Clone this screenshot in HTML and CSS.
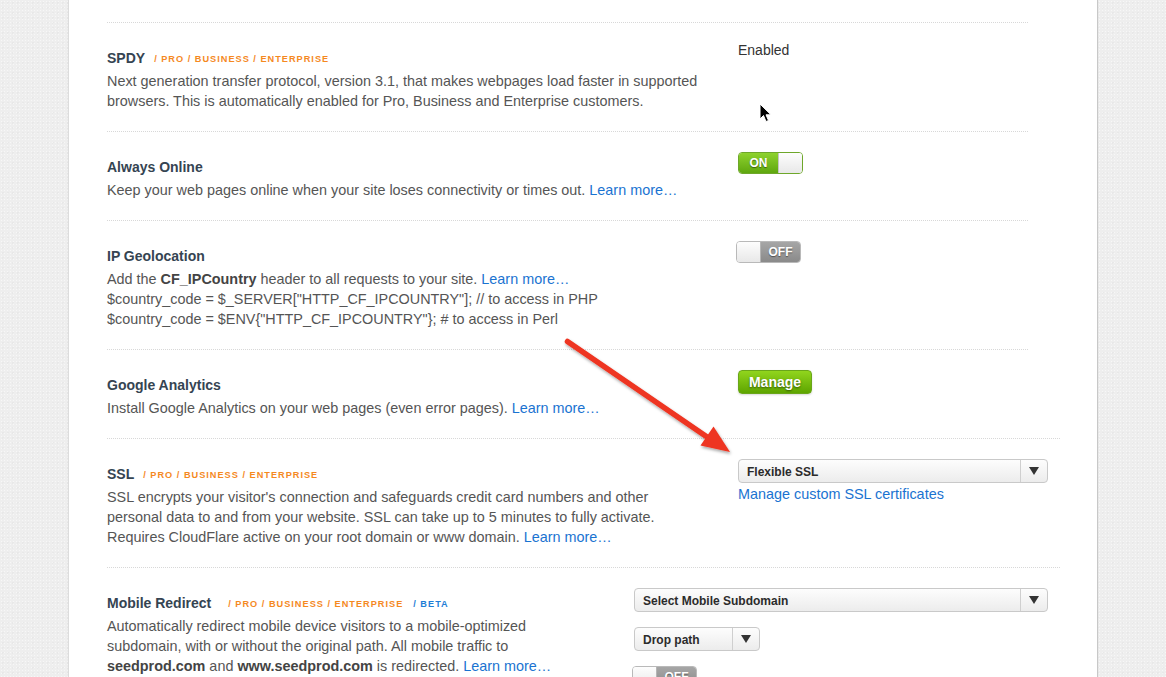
FILE: index.html
```html
<!DOCTYPE html>
<html>
<head>
<meta charset="utf-8">
<title>Settings</title>
<link rel="stylesheet" href="styles.css">
</head>
<body>
<div class="page">
  <div class="panel">
    <div class="lead"></div>

    <div class="row">
      <div class="info">
        <h3 class="title">SPDY<span class="plans">/ PRO / BUSINESS / ENTERPRISE</span></h3>
        <p class="desc">Next generation transfer protocol, version 3.1, that makes webpages load faster in supported<br>browsers. This is automatically enabled for Pro, Business and Enterprise customers.</p>
      </div>
      <div class="ctrl"><span class="status">Enabled</span></div>
    </div>

    <div class="row">
      <div class="info">
        <h3 class="title">Always Online</h3>
        <p class="desc">Keep your web pages online when your site loses connectivity or times out. <a href="#">Learn more…</a></p>
      </div>
      <div class="ctrl">
        <div class="toggle on"><span class="lbl">ON</span><span class="knob"></span></div>
      </div>
    </div>

    <div class="row">
      <div class="info">
        <h3 class="title">IP Geolocation</h3>
        <p class="desc">Add the <b>CF_IPCountry</b> header to all requests to your site. <a href="#">Learn more…</a><br>$country_code = $_SERVER["HTTP_CF_IPCOUNTRY"]; // to access in PHP<br>$country_code = $ENV{"HTTP_CF_IPCOUNTRY"}; # to access in Perl</p>
      </div>
      <div class="ctrl">
        <div class="toggle off shift"><span class="knob"></span><span class="lbl">OFF</span></div>
      </div>
    </div>

    <div class="row">
      <div class="info">
        <h3 class="title">Google Analytics</h3>
        <p class="desc">Install Google Analytics on your web pages (even error pages). <a href="#">Learn more…</a></p>
      </div>
      <div class="ctrl">
        <button class="btn-green">Manage</button>
      </div>
    </div>

    <div class="row wide">
      <div class="info">
        <h3 class="title">SSL<span class="plans">/ PRO / BUSINESS / ENTERPRISE</span></h3>
        <p class="desc">SSL encrypts your visitor's connection and safeguards credit card numbers and other<br>personal data to and from your website. SSL can take up to 5 minutes to fully activate.<br>Requires CloudFlare active on your root domain or www domain. <a href="#">Learn more…</a></p>
      </div>
      <div class="ctrl">
        <div class="select ssl"><span class="val">Flexible SSL</span><span class="caret"></span></div>
        <a class="sublink" href="#">Manage custom SSL certificates</a>
      </div>
    </div>

    <div class="row wide narrow-info">
      <div class="info">
        <h3 class="title">Mobile Redirect<span class="plans far">/ PRO / BUSINESS / ENTERPRISE</span><span class="plans beta">/ BETA</span></h3>
        <p class="desc">Automatically redirect mobile device visitors to a mobile-optimized<br>subdomain, with or without the original path. All mobile traffic to<br><b>seedprod.com</b> and <b>www.seedprod.com</b> is redirected. <a href="#">Learn more…</a></p>
      </div>
      <div class="ctrl stack">
        <div class="select mobile"><span class="val">Select Mobile Subdomain</span><span class="caret"></span></div>
        <div class="select path"><span class="val">Drop path</span><span class="caret"></span></div>
        <div class="toggle off nudge"><span class="knob"></span><span class="lbl">OFF</span></div>
      </div>
    </div>
  </div>

  <svg class="arrow" width="200" height="140" viewBox="0 0 200 140">
    <defs>
      <filter id="sh" x="-20%" y="-20%" width="140%" height="140%">
        <feDropShadow dx="1" dy="2" stdDeviation="1.6" flood-color="#000" flood-opacity="0.35"/>
      </filter>
    </defs>
    <g filter="url(#sh)" fill="#ee3420">
      <path d="M5.5 8.5 L148 106" stroke="#ee3420" stroke-width="5.5" stroke-linecap="round"/>
      <path d="M168 119 L138.5 112.5 L151.5 93.5 Z"/>
    </g>
  </svg>

  <svg class="cursor" width="14" height="20" viewBox="0 0 14 20">
    <path d="M1 1 L1 16 L4.5 12.5 L7 18.5 L9.5 17.5 L7 11.8 L12 11.8 Z" fill="#000" stroke="#fff" stroke-width="1"/>
  </svg>
</div>
</body>
</html>
```

FILE: styles.css
```css
html, body {
  margin: 0;
  padding: 0;
}
body {
  background: #efefef;
  font-family: "Liberation Sans", Arial, sans-serif;
  font-size: 14px;
  color: #555;
}
.page {
  position: relative;
  width: 1166px;
  height: 677px;
  overflow: hidden;
  background-color: #eeeeee;
  background-image: radial-gradient(rgba(255,255,255,0.5) 1px, transparent 1px), radial-gradient(rgba(0,0,0,0.025) 1px, transparent 1px);
  background-size: 3px 3px, 5px 5px;
}
.panel {
  box-sizing: border-box;
  margin-left: 68px;
  width: 1030px;
  height: 677px;
  background: #fff;
  border-left: 1px solid #dcdcdc;
  border-right: 1px solid #c8c8c8;
  padding-left: 38px;
  box-shadow: 0 0 2px rgba(0,0,0,0.05);
}
.lead {
  height: 22px;
}
.row {
  width: 921px;
  display: grid;
  grid-template-columns: 631px 1fr;
  border-top: 1px dotted #d8d8d8;
  padding: 0 0 20px;
}
.row.wide {
  width: 953px;
}
.row.narrow-info {
  grid-template-columns: 527px 1fr;
}
.info {
  padding-top: 25px;
}
.title {
  margin: 0 0 3px;
  height: 20px;
  font-size: 14px;
  line-height: 20px;
  font-weight: bold;
  color: #354452;
  white-space: nowrap;
}
.plans {
  margin-left: 9px;
  font-size: 9.2px;
  line-height: 10px;
  letter-spacing: 1px;
  color: #f5891f;
  font-weight: bold;
  vertical-align: 1px;
}
.plans.far {
  margin-left: 17px;
}
.plans.beta {
  margin-left: 10px;
  color: #1f7ed6;
}
.desc {
  margin: 0;
  font-size: 14.4px;
  line-height: 20px;
  color: #555;
  white-space: nowrap;
}
.desc b {
  color: #444;
}
a {
  color: #1a73d1;
  text-decoration: none;
}
.ctrl {
  padding-top: 20px;
  display: flex;
  flex-direction: column;
  align-items: flex-start;
}
.ctrl.stack {
  gap: 15px;
}
.status {
  line-height: 14px;
  color: #333;
  font-size: 14px;
}
.toggle {
  box-sizing: border-box;
  width: 65px;
  height: 22px;
  border: 1px solid #b9b9b9;
  border-radius: 4px;
  display: flex;
  overflow: hidden;
  font-size: 12px;
  font-weight: bold;
  color: #fff;
}
.toggle .lbl {
  flex: 1;
  display: flex;
  align-items: center;
  justify-content: center;
  text-shadow: 0 1px 1px rgba(0,0,0,0.45);
}
.toggle .knob {
  width: 23px;
  background: linear-gradient(#fdfdfd, #e8e8e8);
}
.toggle.on {
  border-color: #6ea72a;
}
.toggle.on .lbl {
  background: linear-gradient(#8ed22e, #5fa70f);
}
.toggle.on .knob {
  border-left: 1px solid #c4c4c4;
}
.toggle.off .lbl {
  background: linear-gradient(#a6a6a6, #8a8a8a);
}
.toggle.off .knob {
  border-right: 1px solid #b5b5b5;
}
.toggle.shift {
  margin-left: -2px;
}
.toggle.nudge {
  margin-left: -2px;
}
.btn-green {
  box-sizing: border-box;
  width: 74px;
  height: 24px;
  padding: 0;
  border: 1px solid #6aa619;
  border-radius: 4px;
  background: linear-gradient(#91d51d, #5ea500);
  color: #fff;
  font-family: "Liberation Sans", Arial, sans-serif;
  font-weight: bold;
  font-size: 14px;
  text-shadow: 0 1px 2px rgba(0,0,0,0.5);
  box-shadow: 0 1px 2px rgba(0,0,0,0.15);
}
.select {
  box-sizing: border-box;
  height: 24px;
  display: flex;
  align-items: stretch;
  border: 1px solid #c9c9c9;
  border-radius: 4px;
  background: linear-gradient(#fdfdfd, #ececec);
  font-size: 12px;
  font-weight: bold;
  color: #2b2b2b;
}
.select .val {
  flex: 1;
  display: flex;
  align-items: center;
  padding-left: 8px;
  padding-top: 1px;
}
.select .caret {
  width: 26px;
  border-left: 1px solid #cfcfcf;
  display: flex;
  align-items: center;
  justify-content: center;
}
.select .caret::after {
  content: "";
  width: 0;
  height: 0;
  border-left: 5px solid transparent;
  border-right: 5px solid transparent;
  border-top: 8px solid #333;
}
.select.ssl {
  width: 310px;
}
.select.mobile {
  width: 414px;
}
.select.path {
  width: 126px;
}
.sublink {
  margin-top: 1px;
  line-height: 20px;
  font-size: 14.4px;
}
.arrow {
  position: absolute;
  left: 562px;
  top: 333px;
}
.cursor {
  position: absolute;
  left: 759px;
  top: 103px;
}
```
